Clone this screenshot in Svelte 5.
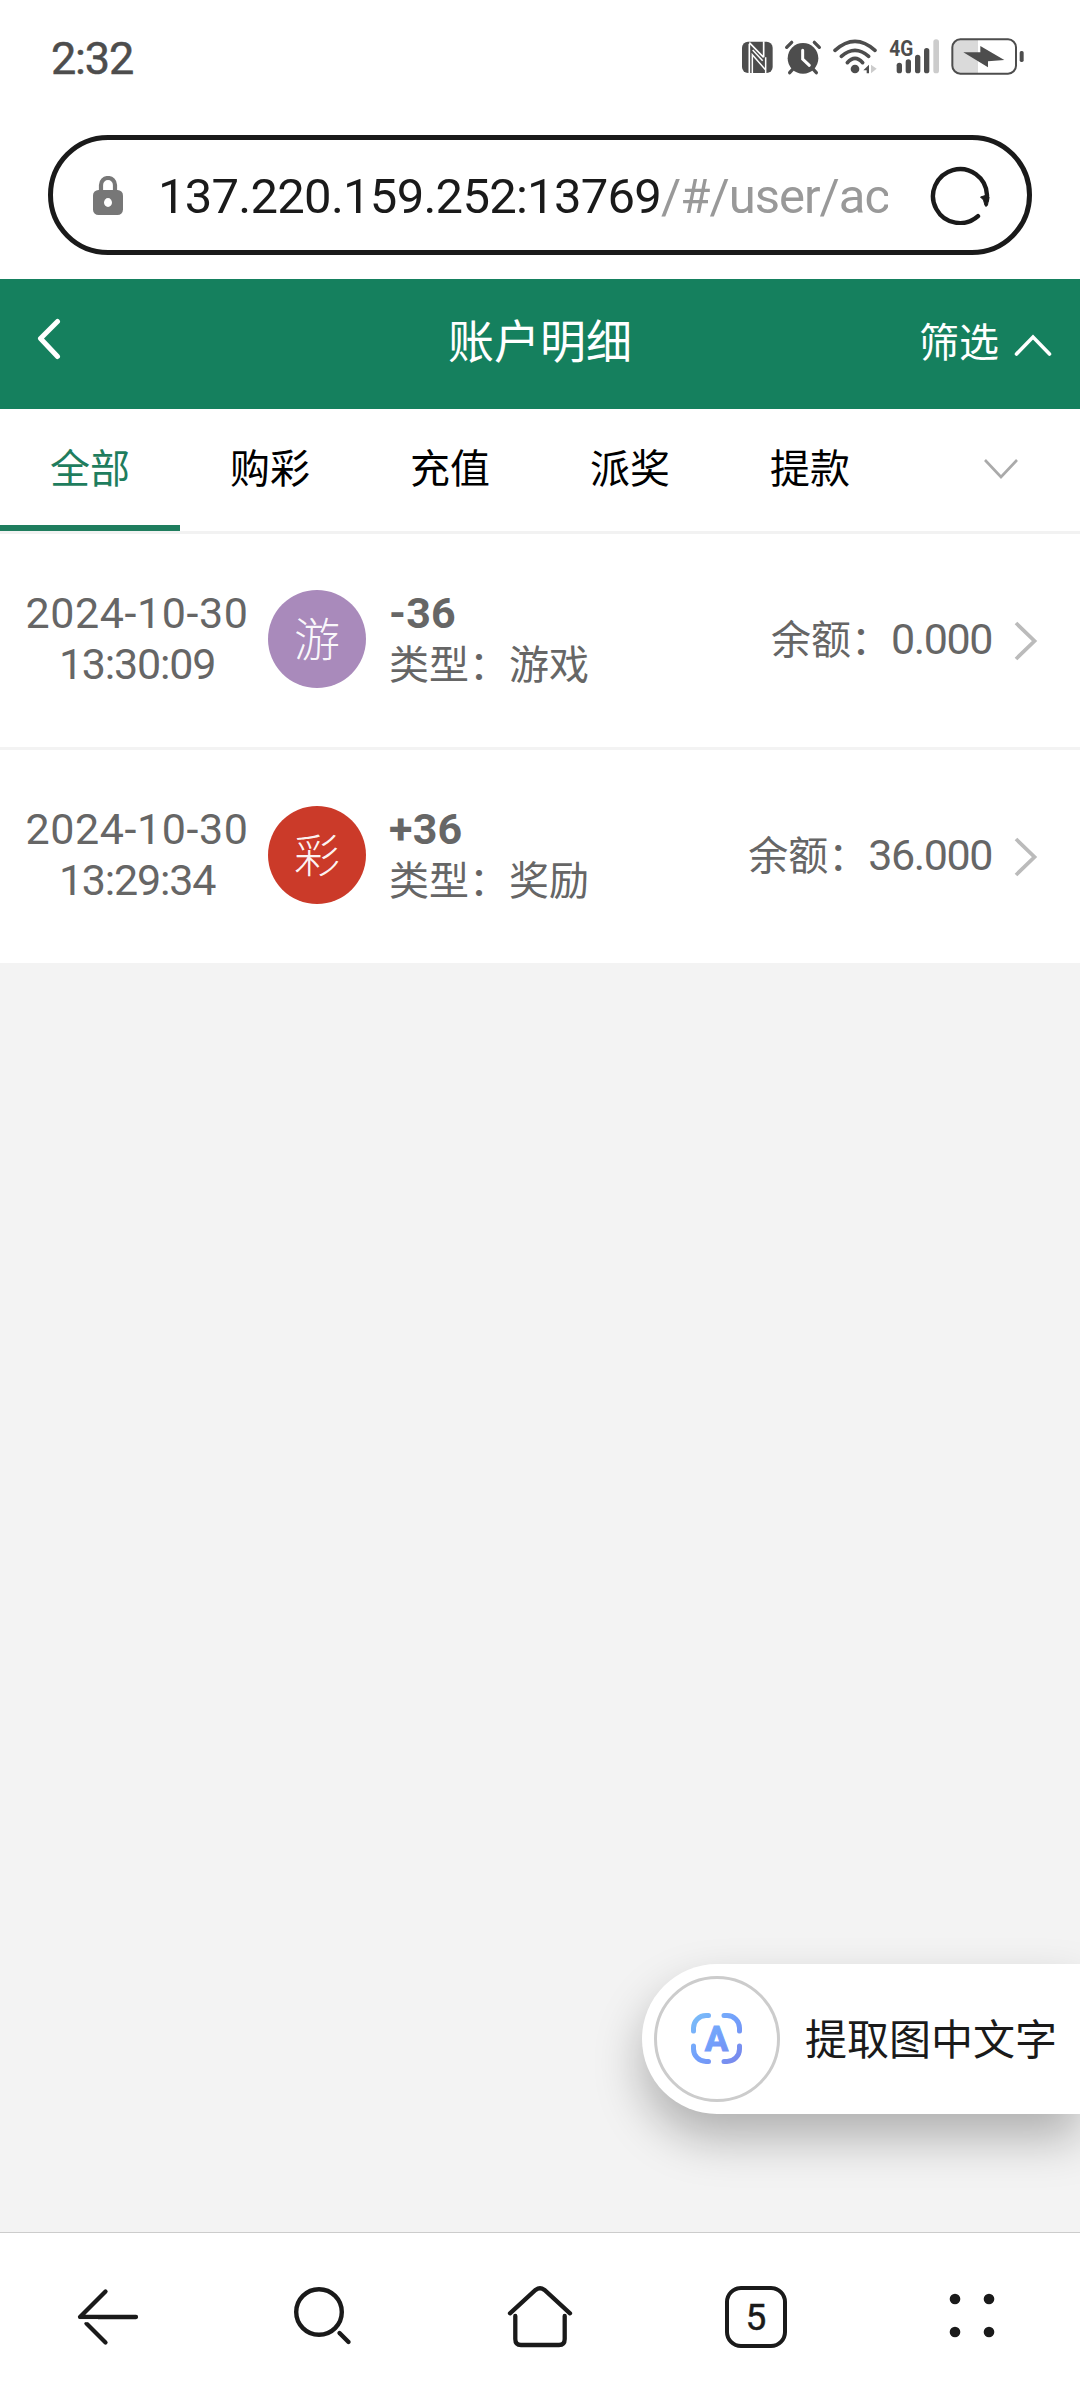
<script lang="ts">
  interface Entry {
    date: string;
    time: string;
    badge: string;
    kind: string;
    amount: string;
    type: string;
    balance: string;
  }

  const host = '137.220.159.252:13769';
  const path = '/#/user/acc';
  const tabs: string[] = ['全部', '购彩', '充值', '派奖', '提款'];
  let activeTab = 0;

  const entries: Entry[] = [
    { date: '2024-10-30', time: '13:30:09', badge: '游', kind: 'game', amount: '-36', type: '游戏', balance: '0.000' },
    { date: '2024-10-30', time: '13:29:34', badge: '彩', kind: 'lottery', amount: '+36', type: '奖励', balance: '36.000' },
  ];
</script>

<div class="screen" lang="zh-CN">
  <div class="status">
    <span class="clock">2:32</span>
    <div class="status-icons">
      <!-- nfc -->
      <svg width="31" height="40" viewBox="66 51 93 120">
        <rect x="66" y="65" width="92" height="94" rx="18" fill="#4d4d4d" />
        <path d="M88 160 V72 M88 68 L131 112 M131 64 V112" fill="none" stroke="#fff" stroke-width="5" />
        <path d="M97 162 V104 L137 150 M137 112 V160" fill="none" stroke="#fff" stroke-width="4.5" />
        <path d="M98 90 L128 122" fill="none" stroke="#fff" stroke-width="4.5" />
      </svg>
      <!-- alarm -->
      <svg width="38" height="40" viewBox="192 51 114 120">
        <g fill="none" stroke="#4d4d4d" stroke-width="10" stroke-linecap="round">
          <path d="M200 82 L215 67 M283 67 L298 82 M209 158 L220 146 M289 158 L278 146" />
        </g>
        <circle cx="249" cy="115" r="46" fill="#4d4d4d" />
        <path d="M248 91 V117 L268 136" fill="none" stroke="#fff" stroke-width="9" stroke-linecap="round" />
      </svg>
      <!-- wifi -->
      <svg width="45" height="40" viewBox="339 51 135 120">
        <g fill="none" stroke="#4d4d4d" stroke-width="11" stroke-linecap="round">
          <path d="M345 91 Q405 37 465 91" />
          <path d="M364 109 Q405 73 446 109" />
          <path d="M382 128 Q405 102 428 128" />
        </g>
        <circle cx="405" cy="147" r="13" fill="#4d4d4d" />
        <path d="M430 151 L447 134 V160 H440 V151 Z" fill="#4d4d4d" />
        <path d="M453 134 L470 146 L453 160 Z" fill="#ccc" />
      </svg>
      <!-- mobile signal -->
      <svg width="51" height="40" viewBox="507 51 153 120">
        <text x="508" y="109" class="network" textLength="72" lengthAdjust="spacingAndGlyphs">4G</text>
        <g fill="#4d4d4d">
          <rect x="530" y="128" width="16" height="32" rx="8" />
          <rect x="557" y="118" width="16" height="42" rx="8" />
          <rect x="585" y="104" width="16" height="56" rx="8" />
          <rect x="612" y="84" width="16" height="76" rx="8" />
        </g>
        <rect x="640" y="58" width="17" height="102" rx="8" fill="#ccc" />
      </svg>
      <!-- battery -->
      <svg width="73" height="40" viewBox="693 51 219 120">
        <path d="M774 60 H718 Q698 60 698 82 V140 Q698 160 718 160 H774 Z" fill="#dadada" />
        <rect x="697" y="58" width="191" height="103" rx="24" fill="none" stroke="#4d4d4d" stroke-width="6" />
        <rect x="899" y="93" width="12" height="33" rx="5" fill="#4d4d4d" />
        <path d="M730 97 H781 V78 L853 120 L804 124 V142 Z" fill="#4d4d4d" />
      </svg>
    </div>
  </div>

  <div class="address-row">
    <div class="address">
      <svg class="lock" width="30" height="39" viewBox="0 0 30 39">
        <path d="M8 16 V9 A7 7 0 0 1 22 9 V16" fill="none" stroke="#777" stroke-width="4.2" />
        <rect x="0" y="14" width="30" height="25" rx="5.5" fill="#777" />
        <ellipse cx="15" cy="26.5" rx="4" ry="4.4" fill="#fff" />
      </svg>
      <div class="url"><span class="host">{host}</span><span class="path">{path}</span></div>
      <svg class="reload" width="60" height="60" viewBox="0 0 60 60">
        <path d="M48 51.2 A27 27 0 1 1 57 30 L57 35" fill="none" stroke="#1a1a1a" stroke-width="4.4" stroke-linecap="round" />
        <path d="M50.5 32 L57 30 L59 32 L57.5 40 Q56.3 42.5 55 40.5 L53.5 35 Z" fill="#1a1a1a" stroke="#1a1a1a" stroke-linejoin="round" />
      </svg>
    </div>
  </div>

  <header class="header">
    <button class="back" aria-label="back">
      <svg width="24" height="42" viewBox="0 0 24 42">
        <path d="M20.5 3.5 L3.5 20.5 L20.5 38.5" fill="none" stroke="#fff" stroke-width="5" stroke-linecap="round" stroke-linejoin="round" />
      </svg>
    </button>
    <h1 class="title">账户明细</h1>
    <button class="filter">
      <span>筛选</span>
      <svg width="38" height="24" viewBox="0 0 38 24">
        <path d="M2.5 22 L19 5 L35.5 22" fill="none" stroke="#fff" stroke-width="3.6" stroke-linecap="round" />
      </svg>
    </button>
  </header>

  <nav class="tabs">
    {#each tabs as tab, i}
      <button class="tab" class:active={i === activeTab} on:click={() => (activeTab = i)}>{tab}</button>
    {/each}
    <button class="tab more" aria-label="more">
      <svg width="36" height="22" viewBox="0 0 36 22">
        <path d="M2 2 L18 19 L34 2" fill="none" stroke="#aaa" stroke-width="2.6" />
      </svg>
    </button>
  </nav>

  <main class="list">
    {#each entries as entry}
      <div class="entry">
        <div class="when">
          <span class="date">{entry.date}</span>
          <span class="time">{entry.time}</span>
        </div>
        <div class="badge {entry.kind}">{entry.badge}</div>
        <div class="detail">
          <strong class="amount">{entry.amount}</strong>
          <span class="type">类型：{entry.type}</span>
        </div>
        <div class="balance">
          <span>余额：</span><span class="number">{entry.balance}</span>
        </div>
        <svg class="arrow" width="24" height="40" viewBox="0 0 24 40">
          <path d="M2 2 L20.5 20 L2 38" fill="none" stroke="#bbb" stroke-width="3.8" />
        </svg>
      </div>
    {/each}
  </main>

  <button class="extract">
    <span class="ring">
      <svg width="51" height="51" viewBox="0 0 51 51">
        <defs>
          <linearGradient id="scan" gradientUnits="userSpaceOnUse" x1="0" y1="0" x2="51" y2="51">
            <stop offset="0" stop-color="#7cc0f8" />
            <stop offset="0.5" stop-color="#729ffb" />
            <stop offset="1" stop-color="#7a86ea" />
          </linearGradient>
        </defs>
        <g fill="none" stroke="url(#scan)" stroke-width="5" stroke-linecap="round">
          <path d="M2.5 18 V15 A12.5 12.5 0 0 1 15 2.5 H17.5" />
          <path d="M33 2.5 H36 A12.5 12.5 0 0 1 48.5 15 V18" />
          <path d="M48.5 33 V36 A12.5 12.5 0 0 1 36 48.5 H33" />
          <path d="M17.5 48.5 H15 A12.5 12.5 0 0 1 2.5 36 V33" />
        </g>
        <text class="letter" x="25.5" y="37.5" text-anchor="middle" fill="url(#scan)" stroke="url(#scan)">A</text>
      </svg>
    </span>
    <span class="extract-label">提取图中文字</span>
  </button>

  <footer class="toolbar">
    <button aria-label="go back">
      <svg width="64" height="64" viewBox="0 0 64 64">
        <g fill="none" stroke="#1a1a1a" stroke-width="4.3" stroke-linecap="round" stroke-linejoin="round">
          <path d="M60 32 H4 L29.5 6.5" />
          <path d="M10.5 38.5 L29.5 57.5" />
        </g>
        <rect x="2" y="34.2" width="20" height="3" fill="#fff" />
      </svg>
    </button>
    <button aria-label="search">
      <svg width="64" height="64" viewBox="0 0 64 64">
        <g fill="none" stroke="#1a1a1a" stroke-width="4.4" stroke-linecap="round">
          <circle cx="27" cy="27" r="22.8" />
          <path d="M47.5 48 L56.5 57" />
        </g>
      </svg>
    </button>
    <button aria-label="home">
      <svg width="66" height="64" viewBox="0 0 66 64">
        <g fill="none" stroke="#1a1a1a" stroke-width="4.3" stroke-linecap="round">
          <path d="M3 28.3 L28.5 5 Q33 1.4 37.5 5 L63 28.3" />
          <path d="M8.3 31 V54 Q8.3 60 14 60 H52 Q57.7 60 57.7 54 V31" />
        </g>
      </svg>
    </button>
    <button aria-label="tabs"><span class="count">5</span></button>
    <button aria-label="menu">
      <svg width="64" height="64" viewBox="0 0 64 64" fill="#1a1a1a">
        <circle cx="15" cy="14" r="5.3" />
        <circle cx="49" cy="14" r="5.3" />
        <circle cx="15" cy="47" r="5.3" />
        <circle cx="49" cy="47" r="5.3" />
      </svg>
    </button>
  </footer>
</div>

<style>
  :global(body) {
    margin: 0;
    background: #f3f3f3;
  }

  .screen {
    position: relative;
    display: flex;
    flex-direction: column;
    width: 1080px;
    height: 2400px;
    overflow: hidden;
    background: #f3f3f3;
    color: #666;
    font-family: Roboto, 'Noto Sans CJK SC', sans-serif;
    font-size: 40px;
  }

  svg {
    display: block;
    flex: none;
  }

  button {
    padding: 0;
    border: none;
    background: none;
    color: inherit;
    font: inherit;
    cursor: pointer;
  }

  .status {
    display: flex;
    align-items: center;
    justify-content: space-between;
    box-sizing: border-box;
    height: 114px;
    padding: 0 56px 0 51px;
    background: #fff;
  }

  .clock {
    padding-top: 3px;
    color: #4d4d4d;
    font-size: 45px;
    letter-spacing: -1.2px;
    line-height: 50px;
    -webkit-text-stroke: 0.5px #4d4d4d;
  }

  .status-icons {
    display: flex;
    gap: 11px;
  }

  .network {
    font-size: 66px;
    font-weight: 700;
    fill: #4d4d4d;
  }

  .address-row {
    box-sizing: border-box;
    height: 165px;
    padding: 21px 48px 24px;
    background: #fff;
  }

  .address {
    display: flex;
    align-items: center;
    box-sizing: border-box;
    height: 120px;
    padding: 0 37px 0 40px;
    border: 5px solid #1a1a1a;
    border-radius: 60px;
  }

  .url {
    flex: none;
    width: 730px;
    margin: 3px 0 0 35px;
    overflow: hidden;
    white-space: nowrap;
    font-size: 49px;
    line-height: 64px;
  }

  .host {
    color: #1a1a1a;
    letter-spacing: -0.75px;
  }

  .path {
    color: #999;
    letter-spacing: -1px;
  }

  .reload {
    margin-left: auto;
  }

  .header {
    display: grid;
    grid-template-columns: 1fr auto 1fr;
    align-items: center;
    height: 130px;
    background: #15805e;
    color: #fff;
  }

  .back {
    justify-self: start;
    margin: 0 0 10px 37px;
  }

  .title {
    margin: 0 0 5px;
    font-size: 46px;
    font-weight: 400;
    line-height: 60px;
  }

  .filter {
    display: flex;
    align-items: center;
    justify-self: end;
    gap: 15px;
    margin: 0 28px 0 0;
    line-height: 50px;
  }

  .tabs {
    display: flex;
    height: 122px;
    border-bottom: 3px solid #f2f2f2;
    background: #fff;
    color: #000;
  }

  .tab {
    box-sizing: border-box;
    width: 180px;
    padding-bottom: 3px;
    border-bottom: 6px solid transparent;
  }

  .tab.active {
    border-color: #1f7d5e;
    color: #1f7d5e;
  }

  .tab.more {
    display: flex;
    align-items: center;
    padding: 4px 0 0 83px;
  }

  .entry {
    display: flex;
    align-items: center;
    height: 213px;
    background: #fff;
  }

  .entry + .entry {
    border-top: 3px solid #f3f3f3;
  }

  .when {
    display: flex;
    flex-direction: column;
    align-items: center;
    width: 262px;
    margin: 0 0 4px 6px;
    font-size: 43px;
    line-height: 51px;
  }

  .date {
    letter-spacing: 0.6px;
  }

  .time {
    letter-spacing: -1.2px;
  }

  .badge {
    flex: none;
    width: 98px;
    height: 98px;
    margin-bottom: 3px;
    border-radius: 50%;
    color: rgba(255, 255, 255, 0.95);
    font-size: 46px;
    font-weight: 300;
    line-height: 100px;
    text-align: center;
  }

  .badge.game {
    background: #a98abb;
  }

  .badge.lottery {
    background: #cb3a29;
  }

  .detail {
    display: flex;
    flex-direction: column;
    margin: 0 0 4px 23px;
    line-height: 51px;
  }

  .amount {
    font-size: 43px;
    font-weight: 700;
    letter-spacing: 0.2px;
  }

  .type {
    padding-top: 1px;
    margin-bottom: -1px;
  }

  .balance {
    display: flex;
    align-items: baseline;
    margin: 0 22px 2px auto;
    line-height: 51px;
  }

  .number {
    font-size: 43px;
    letter-spacing: -1.4px;
  }

  .arrow {
    margin-right: 42px;
  }

  /* sits on top of the page, flush with its right side */
  .extract {
    position: absolute;
    right: 0;
    top: 1964px;
    display: flex;
    align-items: center;
    box-sizing: border-box;
    width: 438px;
    height: 150px;
    padding-left: 12px;
    border-radius: 75px 0 0 75px;
    background: #fff;
    box-shadow: 0 24px 48px rgba(0, 0, 0, 0.28);
    color: #1a1a1a;
    font-size: 42px;
    white-space: nowrap;
  }

  .ring {
    display: flex;
    align-items: center;
    justify-content: center;
    box-sizing: border-box;
    width: 126px;
    height: 126px;
    padding: 0 2px 2px 0;
    border: 3px solid #ccc;
    border-radius: 50%;
  }

  .letter {
    font-size: 35px;
    font-weight: 700;
    stroke-width: 1;
  }

  .extract-label {
    margin: 0 0 6px 25px;
  }

  .toolbar {
    display: grid;
    grid-template-columns: repeat(5, 216px);
    align-items: center;
    box-sizing: border-box;
    height: 168px;
    margin-top: auto;
    border-top: 1px solid #ccc;
    background: #fff;
  }

  .toolbar button {
    display: flex;
    justify-content: center;
  }

  .count {
    box-sizing: border-box;
    width: 62px;
    height: 62px;
    border: 4.5px solid #1a1a1a;
    border-radius: 16px;
    color: #1a1a1a;
    font-size: 37px;
    line-height: 55px;
    text-align: center;
    -webkit-text-stroke: 0.5px #1a1a1a;
  }
</style>
